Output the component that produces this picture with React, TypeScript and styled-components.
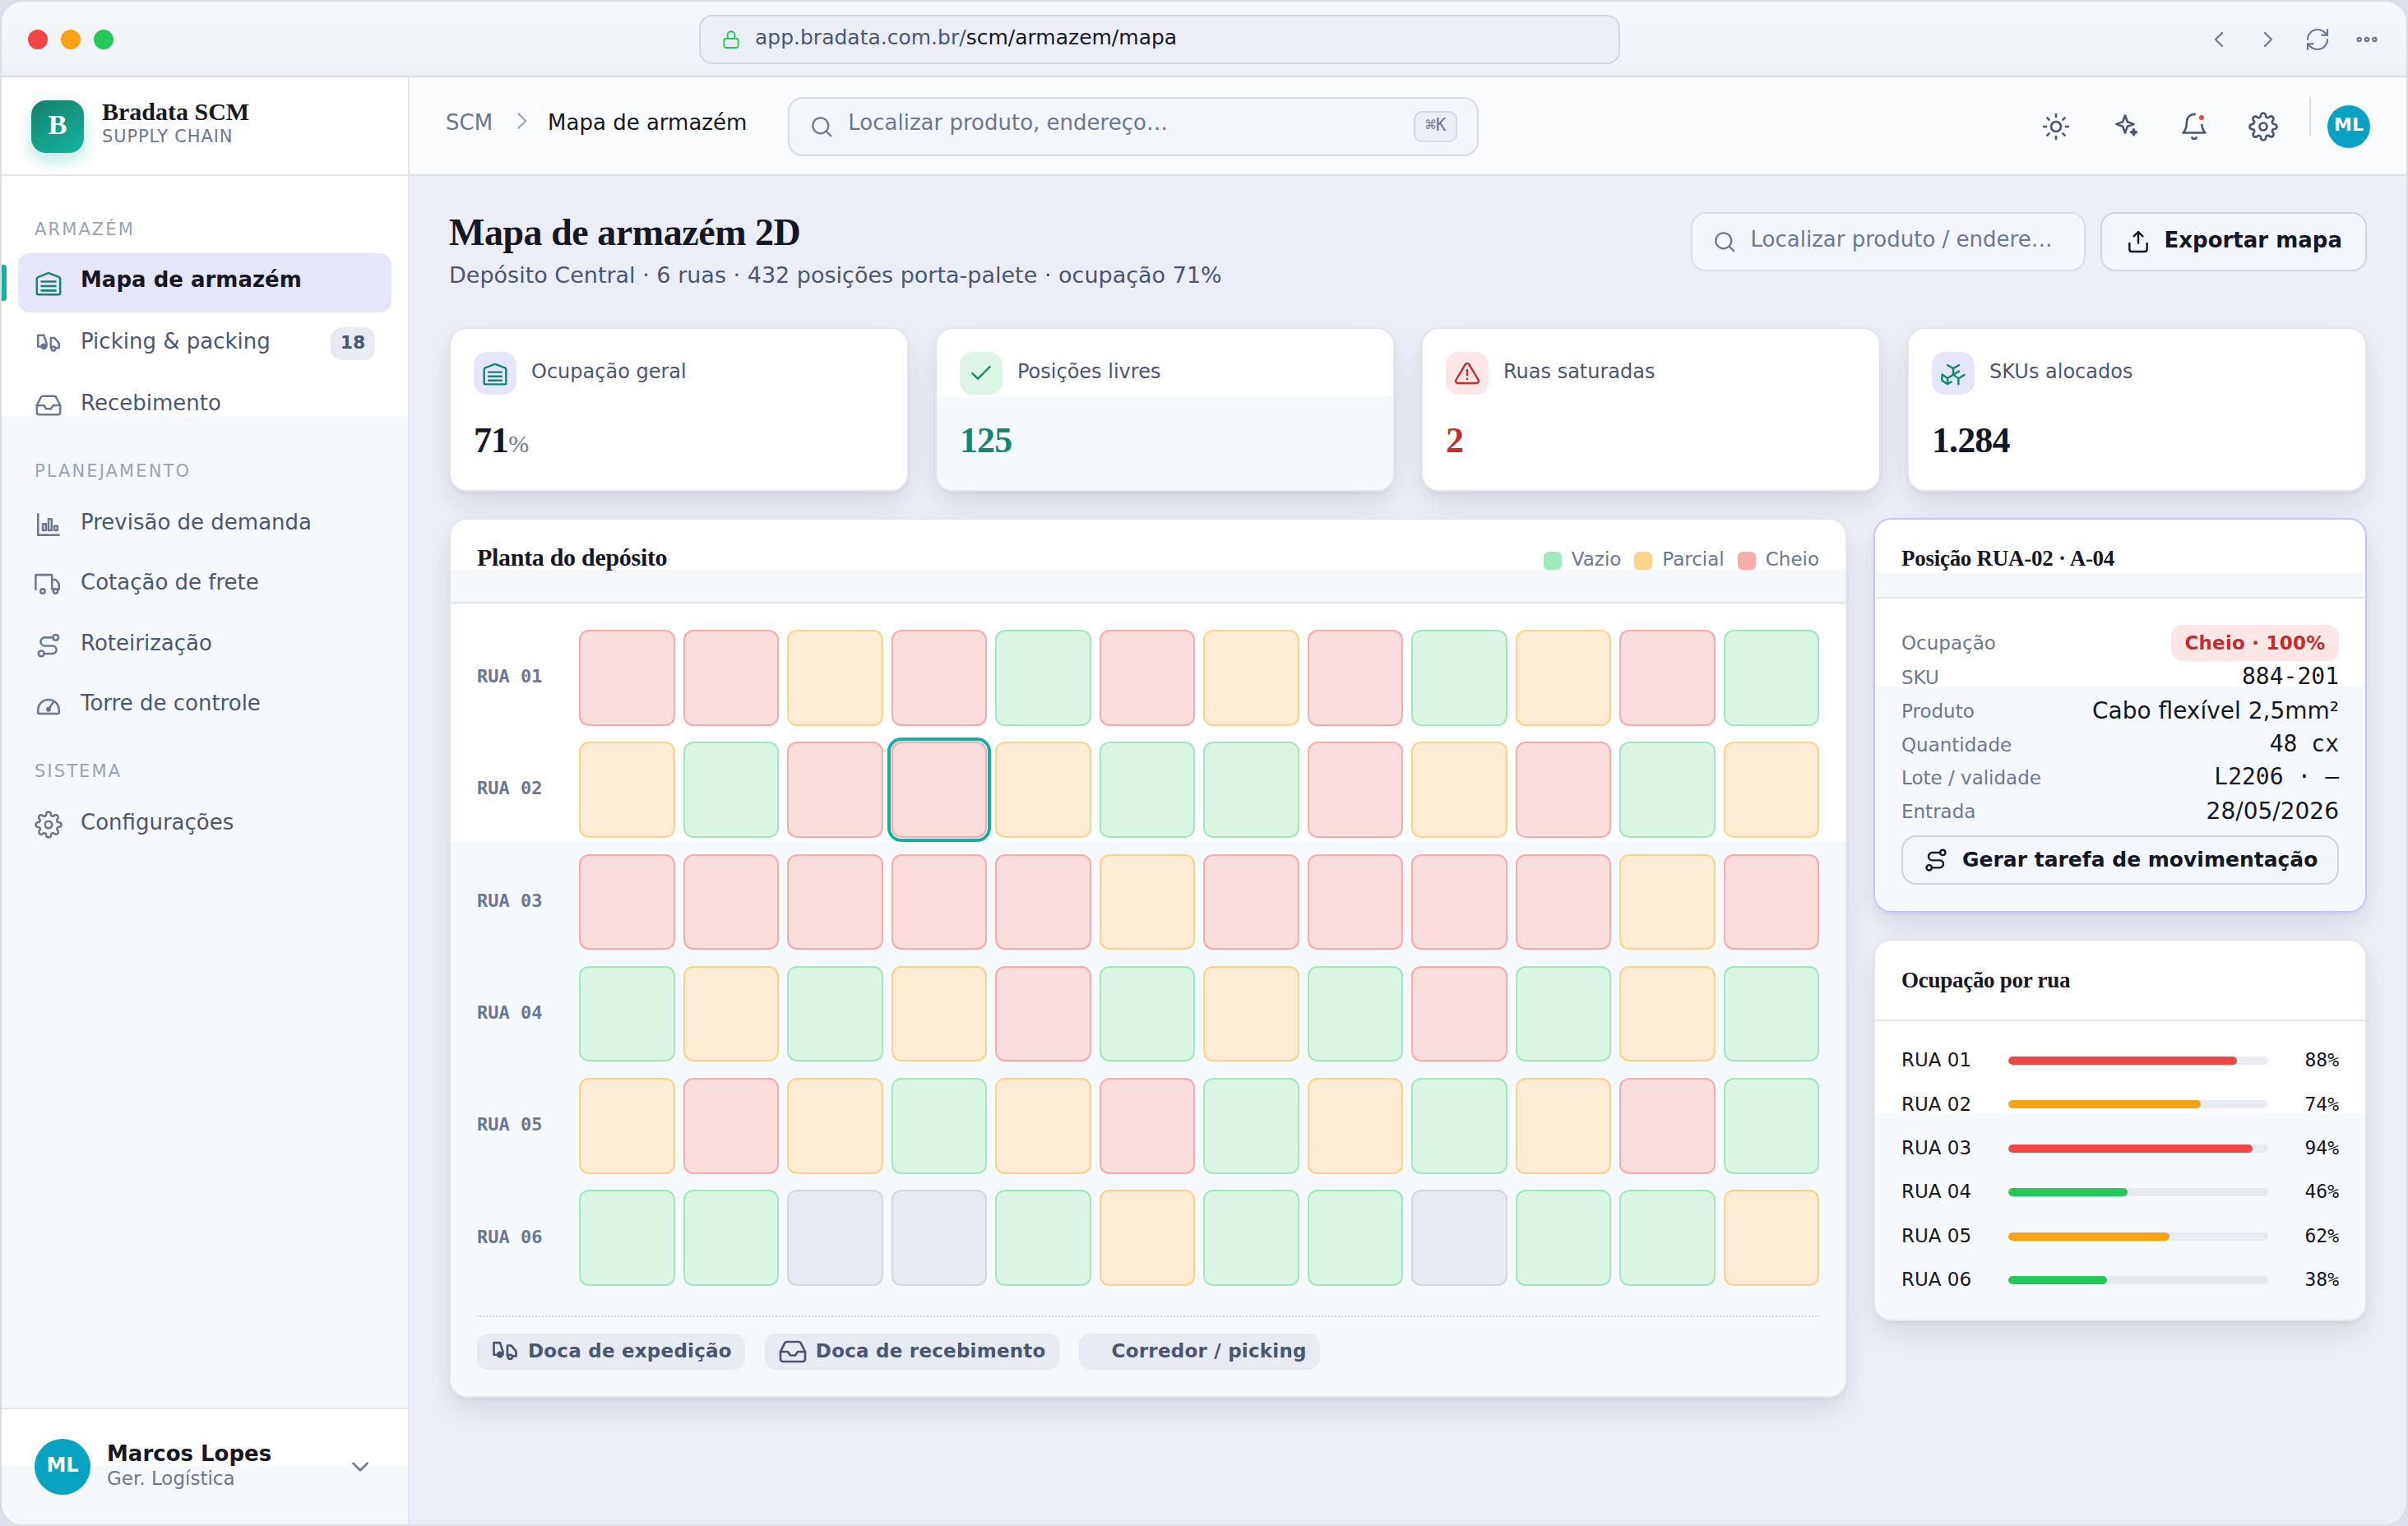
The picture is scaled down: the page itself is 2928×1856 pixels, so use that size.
import * as React from 'react';
import styled, {createGlobalStyle, ThemeProvider} from 'styled-components';

const theme = {
  colors: {
    ink: '#151824',
    text: '#4b5672',
    muted: '#6b7890',
    faint: '#98a4b5',
    line: '#e5e6ea',
    lineStrong: '#d5d8df',
    canvas: '#eceef6',
    surface: '#ffffff',
    tint: '#f5f9fc',
    field: '#f3f6fb',
    chip: '#e8ebf2',
    accentSoft: '#e6e6fb',
    teal: '#14b0a0',
    tealDark: '#15856f',
    green: '#25c85b',
    amber: '#f7a313',
    red: '#f14646',
    redDark: '#c52c2b',
    redSoft: '#fde6e6',
    greenSoft: '#dcf5e5',
    avatar: '#08a2c2',
  },
  font: {
    sans: '"DejaVu Sans", "Noto Sans", sans-serif',
    serif: '"Liberation Serif", "DejaVu Serif", serif',
    mono: '"DejaVu Sans Mono", "Liberation Mono", monospace',
  },
};

type Theme = typeof theme;
type P = { theme: Theme };

const GlobalStyle = createGlobalStyle`
  *, *::before, *::after { box-sizing: border-box; }
  html, body { margin: 0; padding: 0; background: #dfe0ee; }
  button { font: inherit; color: inherit; margin: 0; }
`;

/* ---------- icons ---------- */

const ICONS: Record<string, React.ReactNode> = {
  lock: (
    <>
      <rect x="4" y="11" width="16" height="10.2" rx="2.4"/>
      <path d="M8 11V7a4 4 0 0 1 8 0v4"/>
    </>
  ),
  left: <path d="M15 18l-6-6 6-6"/>,
  right: <path d="M9 18l6-6-6-6"/>,
  down: <path d="M6 9l6 6 6-6"/>,
  refresh: (
    <>
      <path d="M3 12a9 9 0 0 1 9-9 9.75 9.75 0 0 1 6.74 2.74L21 8"/>
      <path d="M21 3v5h-5"/>
      <path d="M21 12a9 9 0 0 1-9 9 9.75 9.75 0 0 1-6.74-2.74L3 16"/>
      <path d="M8 16H3v5"/>
    </>
  ),
  more: (
    <>
      <circle cx="5" cy="12" r="1.6"/>
      <circle cx="12" cy="12" r="1.6"/>
      <circle cx="19" cy="12" r="1.6"/>
    </>
  ),
  search: (
    <>
      <circle cx="11" cy="11" r="7.6"/>
      <path d="M21 21l-4.4-4.4"/>
    </>
  ),
  sun: (
    <>
      <circle cx="12" cy="12" r="4"/>
      <path d="M12 2v2M12 20v2M4.9 4.9l1.4 1.4M17.7 17.7l1.4 1.4M2 12h2M20 12h2M4.9 19.1l1.4-1.4M17.7 6.3l1.4-1.4"/>
    </>
  ),
  sparkle: (
    <>
      <path d="M12 3l1.9 5.1L19 10l-5.1 1.9L12 17l-1.9-5.1L5 10l5.1-1.9z"/>
      <path d="M19 14.2l.7 1.6 1.6.7-1.6.7-.7 1.6-.7-1.6-1.6-.7 1.6-.7z" fill="currentColor"/>
    </>
  ),
  bell: (
    <>
      <path d="M18 8A6 6 0 0 0 6 8c0 7-3 9-3 9h18s-3-2-3-9"/>
      <path d="M13.73 21a2 2 0 0 1-3.46 0"/>
    </>
  ),
  gear: (
    <>
      <circle cx="12" cy="12" r="3"/>
      <path d="M19.4 15a1.65 1.65 0 0 0 .33 1.82l.06.06a2 2 0 0 1 0 2.83 2 2 0 0 1-2.83 0l-.06-.06a1.65 1.65 0 0 0-1.82-.33 1.65 1.65 0 0 0-1 1.51V21a2 2 0 0 1-2 2 2 2 0 0 1-2-2v-.09A1.65 1.65 0 0 0 9 19.4a1.65 1.65 0 0 0-1.82.33l-.06.06a2 2 0 0 1-2.83 0 2 2 0 0 1 0-2.83l.06-.06a1.65 1.65 0 0 0 .33-1.82 1.65 1.65 0 0 0-1.51-1H3a2 2 0 0 1-2-2 2 2 0 0 1 2-2h.09A1.65 1.65 0 0 0 4.6 9a1.65 1.65 0 0 0-.33-1.82l-.06-.06a2 2 0 0 1 0-2.83 2 2 0 0 1 2.83 0l.06.06a1.65 1.65 0 0 0 1.82.33H9a1.65 1.65 0 0 0 1-1.51V3a2 2 0 0 1 2-2 2 2 0 0 1 2 2v.09a1.65 1.65 0 0 0 1 1.51 1.65 1.65 0 0 0 1.82-.33l.06-.06a2 2 0 0 1 2.83 0 2 2 0 0 1 0 2.83l-.06.06a1.65 1.65 0 0 0-.33 1.82V9a1.65 1.65 0 0 0 1.51 1H21a2 2 0 0 1 2 2 2 2 0 0 1-2 2h-.09a1.65 1.65 0 0 0-1.51 1z"/>
    </>
  ),
  warehouse: (
    <>
      <path d="M2 21.2V8.6a1.6 1.6 0 0 1 1-1.5l8.3-3.3a2 2 0 0 1 1.4 0L21 7.1a1.6 1.6 0 0 1 1 1.5v12.6a.8.8 0 0 1-.8.8H2.8a.8.8 0 0 1-.8-.8z"/>
      <path d="M6 11h12M6 14.8h12M6 18.6h12"/>
    </>
  ),
  picking: (
    <>
      <path d="M6 14.5H3V4.8h5l2.3 7v2.7"/>
      <circle cx="7.9" cy="14.4" r="1.9" fill="currentColor"/>
      <path d="M14 15.5V7h3l4 4.6v4h-2.500"/>
      <circle cx="16.2" cy="16.2" r="1.7"/>
    </>
  ),
  inbox: (
    <>
      <path d="M22 12h-6l-2 3h-4l-2-3H2"/>
      <path d="M5.45 5.11L2 12v6a2 2 0 0 0 2 2h16a2 2 0 0 0 2-2v-6l-3.45-6.89A2 2 0 0 0 16.76 4H7.24a2 2 0 0 0-1.79 1.11z"/>
    </>
  ),
  chart: (
    <>
      <path d="M3 3v18h18"/>
      <path d="M7.1 11.4h2.7V17H7.1zM12 7.3h2.7V17H12zM17 13.3h2.7V17H17z"/>
    </>
  ),
  truck: (
    <>
      <path d="M1 16V4.600a1 1 0 0 1 1-1h12a1 1 0 0 1 1 1V16h6v-4.800l-2.800-3.400H15"/>
      <circle cx="7" cy="17.700" r="1.900"/>
      <circle cx="18" cy="17.700" r="1.900"/>
    </>
  ),
  route: (
    <>
      <circle cx="18.200" cy="5.200" r="2.400"/>
      <circle cx="5.800" cy="19" r="2.400"/>
      <path d="M15.800 5.200H8.800a3.500 3.500 0 0 0 0 7.100h6.600a3.350 3.350 0 0 1 0 6.700H8.200"/>
    </>
  ),
  gauge: (
    <>
      <path d="M3 18V16a9 9 0 0 1 18 0v2a1 1 0 0 1-1 1H4a1 1 0 0 1-1-1z"/>
      <path d="M12 15.200l3.900-5.600"/>
      <circle cx="12" cy="15.300" r="1.200" fill="currentColor"/>
    </>
  ),
  check: <path d="M20 6L9 17l-5-5"/>,
  alert: (
    <>
      <path d="M10.29 3.86L1.82 18a2 2 0 0 0 1.71 3h16.94a2 2 0 0 0 1.71-3L13.71 3.86a2 2 0 0 0-3.42 0z"/>
      <path d="M12 9v4.500M12 17v.2"/>
    </>
  ),
  sprout: (
    <>
      <path d="M6.800 4.500L12 7.600l5.300-3.100M12 7.600v5.600M17.300 10.200L6.800 16.500 2 13.200c-.5 2.400-.5 4 0 5.600l4.800 3.100 3.500-2.200M6.800 16.500v5.400"/>
      <path d="M12 13.200l4.800 3.600 5.400-3.400M16.800 16.800V22"/>
    </>
  ),
  upload: (
    <>
      <path d="M12 13.200V3M8 7l4-4 4 4"/>
      <path d="M4 13.500V19a2 2 0 0 0 2 2h12a2 2 0 0 0 2-2v-5.500"/>
    </>
  ),
};

const Svg = styled.svg`
  display: block;
  flex: none;
  fill: none;
  stroke: currentColor;
  stroke-linecap: round;
  stroke-linejoin: round;
`;

const Icon = ({name, size, stroke = 1.8}: { name: string; size: number; stroke?: number }) => (
  <Svg width={size} height={size} viewBox="0 0 24 24" strokeWidth={stroke}>{ICONS[name]}</Svg>
);

/* ---------- window ---------- */

const Window = styled.div`
  width: 2928px;
  height: 1856px;
  border: 2px solid #dbdde2;
  border-radius: 28px;
  overflow: hidden;
  display: flex;
  flex-direction: column;
  background: ${(p: P) => p.theme.colors.canvas};
  color: ${(p: P) => p.theme.colors.ink};
  font-family: ${(p: P) => p.theme.font.sans};
  font-size: 26px;
  line-height: 1.2;
  white-space: nowrap;
`;

const TitleBar = styled.header`
  flex: none;
  height: 92px;
  padding: 2px 32px 0;
  display: grid;
  grid-template-columns: 816px 1120px 1fr;
  align-items: center;
  background: linear-gradient(#f6fafd, #edf0f5);
  border-bottom: 2px solid #dcdee4;
`;

const Lights = styled.div`
  display: flex;
  gap: 16px;
`;

const Light = styled.span<{ color: string }>`
  width: 24px;
  height: 24px;
  border-radius: 50%;
  background: ${p => p.color};
`;

const Address = styled.div`
  height: 60px;
  padding: 0 24px;
  display: flex;
  align-items: center;
  gap: 16px;
  border: 2px solid ${(p: P) => p.theme.colors.lineStrong};
  border-radius: 16px;
  background: ${(p: P) => p.theme.colors.canvas};
  color: ${(p: P) => p.theme.colors.green};
`;

const AddressText = styled.span`
  padding-bottom: 5px;
  font-size: 25px;
  color: ${(p: P) => p.theme.colors.text};
  b {
    font-weight: 400;
    color: ${(p: P) => p.theme.colors.ink};
  }
`;

const WindowTools = styled.div`
  display: flex;
  justify-content: flex-end;
  gap: 28px;
  color: ${(p: P) => p.theme.colors.muted};
`;

const Body = styled.div`
  flex: 1;
  min-height: 0;
  display: flex;
`;

/* ---------- sidebar ---------- */

// surface that turns from white to the cool tint at a given height
const surface = (p: P & { $split?: number }) => p.$split
  ? `linear-gradient(${p.theme.colors.surface} ${p.$split}px, ${p.theme.colors.tint} ${p.$split}px)`
  : p.theme.colors.surface;

const Sidebar = styled.aside`
  flex: none;
  width: 496px;
  display: flex;
  flex-direction: column;
  border-right: 2px solid ${(p: P) => p.theme.colors.line};
  background: ${(p: P) => p.theme.colors.surface};
`;

const Brand = styled.div`
  flex: none;
  height: 120px;
  padding: 2px 36px 0;
  display: flex;
  align-items: center;
  gap: 22px;
  border-bottom: 2px solid ${(p: P) => p.theme.colors.line};
`;

const Logo = styled.div`
  width: 64px;
  height: 64px;
  padding-bottom: 5px;
  display: grid;
  place-items: center;
  border-radius: 18px;
  background: linear-gradient(150deg, #178069, #14b4a4);
  box-shadow: 0 8px 20px rgba(20, 176, 160, .32);
  color: #fff;
  font: 700 34px/1 ${(p: P) => p.theme.font.serif};
`;

const BrandName = styled.div`
  font: 700 30px/34px ${(p: P) => p.theme.font.serif};
`;

const BrandSub = styled.div`
  margin-bottom: 9px;
  font-size: 21px;
  line-height: 27px;
  letter-spacing: .04em;
  color: ${(p: P) => p.theme.colors.muted};
`;

const Nav = styled.nav<{ $split?: number }>`
  flex: 1;
  padding: 20.7px 20px;
  background: ${surface};
`;

const NavLabel = styled.div`
  margin: 28px 0 12.9px;
  padding: 0 20px;
  font-size: 21px;
  line-height: 32px;
  letter-spacing: .1em;
  color: ${(p: P) => p.theme.colors.faint};
`;

const NavItem = styled.a<{ $active?: boolean; $tall?: boolean }>`
  position: relative;
  height: ${p => p.$tall ? 74.5 : 72}px;
  margin-bottom: 1.5px;
  padding: 0 20px;
  display: flex;
  align-items: center;
  gap: 22px;
  border-radius: 14px;
  background: ${p => p.$active ? (p.theme as Theme).colors.accentSoft : 'transparent'};
  color: ${p => p.$active ? (p.theme as Theme).colors.tealDark : (p.theme as Theme).colors.muted};

  &::before {
    content: ${p => p.$active ? '""' : 'none'};
    position: absolute;
    left: -20px;
    top: 14px;
    width: 6px;
    height: 44px;
    border-radius: 0 4px 4px 0;
    background: ${(p: P) => p.theme.colors.teal};
  }
`;

const NavText = styled.span<{ $active?: boolean }>`
  flex: 1;
  padding-bottom: 5px;
  font-weight: ${p => p.$active ? 700 : 400};
  color: ${p => p.$active ? (p.theme as Theme).colors.ink : (p.theme as Theme).colors.text};
`;

const Count = styled.span`
  width: 54px;
  height: 40px;
  border-radius: 14px;
  background: ${(p: P) => p.theme.colors.chip};
  color: ${(p: P) => p.theme.colors.text};
  font-size: 22px;
  font-weight: 700;
  line-height: 37px;
  text-align: center;
`;

const UserBar = styled.div<{ $split?: number }>`
  flex: none;
  height: 142px;
  padding: 0 41px 0 40px;
  display: flex;
  align-items: center;
  border-top: 2px solid ${(p: P) => p.theme.colors.line};
  background: ${surface};
  color: ${(p: P) => p.theme.colors.muted};
`;

const Avatar = styled.div<{ $size: number }>`
  flex: none;
  width: ${p => p.$size}px;
  height: ${p => p.$size}px;
  padding-bottom: 4px;
  display: grid;
  place-items: center;
  border-radius: 50%;
  background: ${(p: P) => p.theme.colors.avatar};
  color: #fff;
  font-weight: 700;
  font-size: ${p => p.$size > 60 ? 24 : 22}px;
`;

const UserText = styled.div`
  flex: 1;
  margin: 0 0 2px 20px;
  line-height: 30px;
  font-size: 23px;
  b {
    display: block;
    font-size: 26px;
    color: ${(p: P) => p.theme.colors.ink};
  }
`;

/* ---------- top bar ---------- */

const Main = styled.main`
  flex: 1;
  min-width: 0;
  display: flex;
  flex-direction: column;
`;

const TopBar = styled.div`
  flex: none;
  height: 120px;
  padding: 2px 44px 0;
  display: flex;
  align-items: center;
  border-bottom: 2px solid #dfe1e8;
  background: #fafbfd;
`;

const Crumb = styled.span<{ $current?: boolean }>`
  padding-bottom: 8px;
  color: ${p => p.$current ? (p.theme as Theme).colors.ink : (p.theme as Theme).colors.muted};
`;

const CrumbArrow = styled.span`
  margin: 0 14px 14px 19px;
  color: ${(p: P) => p.theme.colors.faint};
`;

const Field = styled.div<{ $width: number; $lift: number }>`
  width: ${p => p.$width}px;
  height: 72px;
  padding: 0 24px;
  display: flex;
  align-items: center;
  gap: 17px;
  border: 2px solid #dadde3;
  border-radius: 18px;
  background: ${(p: P) => p.theme.colors.field};
  color: ${(p: P) => p.theme.colors.muted};
  > span {
    flex: 1;
    padding-bottom: ${p => p.$lift}px;
  }
`;

const GlobalSearch = styled(Field)`
  margin-left: 50px;
`;

const Kbd = styled.kbd`
  width: 53px;
  height: 38px;
  border: 2px solid ${(p: P) => p.theme.colors.lineStrong};
  border-radius: 10px;
  background: ${(p: P) => p.theme.colors.canvas};
  font: 21px/30px ${(p: P) => p.theme.font.mono};
  text-align: center;
`;

const Actions = styled.div`
  margin-left: auto;
  display: flex;
  align-items: center;
  gap: 12px;
`;

const IconButton = styled.button`
  position: relative;
  width: 72px;
  height: 72px;
  padding: 0;
  display: grid;
  place-items: center;
  border: 0;
  background: none;
  color: ${(p: P) => p.theme.colors.text};
`;

const Dot = styled.i`
  position: absolute;
  left: 37px;
  top: 17px;
  width: 16px;
  height: 16px;
  border: 5px solid #fdfdfe;
  border-radius: 50%;
  background: ${(p: P) => p.theme.colors.red};
`;

const Divider = styled.i`
  width: 2px;
  height: 48px;
  margin: 0 8px 24px;
  background: #dfe1e8;
`;

/* ---------- page ---------- */

const Page = styled.div`
  flex: 1;
  padding: 44px 48px;
`;

const PageHead = styled.div`
  height: 140px;
  display: flex;
  align-items: flex-start;
  gap: 18px;
`;

const Title = styled.h1`
  margin: 2px 0 10px;
  font: 700 46px/46px ${(p: P) => p.theme.font.serif};
  letter-spacing: -.01em;
`;

const Subtitle = styled.p`
  margin: 0;
  font-size: 27px;
  line-height: 38px;
  color: ${(p: P) => p.theme.colors.text};
`;

const Headings = styled.div`
  flex: 1;
`;

const Button = styled.button<{ $small?: boolean }>`
  width: ${p => p.$small ? '100%' : 'auto'};
  height: ${p => p.$small ? 60 : 72}px;
  padding: 0 ${p => p.$small ? 24 : 28}px;
  display: flex;
  align-items: center;
  gap: 16px;
  border: 2px solid #d3d6de;
  border-radius: 18px;
  background: ${(p: P) => p.theme.colors.field};
  color: ${(p: P) => p.theme.colors.ink};
  font-weight: 700;
  font-size: ${p => p.$small ? 25 : 26}px;
  > span {
    padding-bottom: ${p => p.$small ? 1 : 2}px;
  }
`;

const card = `
  border: 2px solid #e5e6ea;
  border-radius: 22px;
  box-shadow: 0 2px 4px rgba(24, 30, 50, .06), 0 16px 36px -6px rgba(24, 30, 50, .13);
`;

const Kpis = styled.div`
  display: grid;
  grid-template-columns: repeat(4, 1fr);
  gap: 32px;
  margin-bottom: 32px;
`;

const Kpi = styled.div<{ $split?: number }>`
  ${card}
  height: 200px;
  padding: 28px;
  background: ${surface};
`;

const KpiHead = styled.div`
  display: flex;
  align-items: center;
  gap: 18px;
  font-size: 24px;
  color: ${(p: P) => p.theme.colors.text};
  > span {
    padding-bottom: 4px;
  }
`;

const Tile = styled.div<{ $bg: string; $fg: string }>`
  width: 52px;
  height: 52px;
  display: grid;
  place-items: center;
  border-radius: 16px;
  background: ${p => p.$bg};
  color: ${p => p.$fg};
`;

const KpiValue = styled.div<{ $color: string }>`
  margin-top: 31px;
  font: 700 44px/50px ${(p: P) => p.theme.font.serif};
  letter-spacing: -.02em;
  color: ${p => p.$color};
  small {
    font-size: 30px;
    font-weight: 400;
    color: ${(p: P) => p.theme.colors.muted};
  }
`;

const Columns = styled.div`
  display: grid;
  grid-template-columns: 1fr 600px;
  align-items: start;
  gap: 32px;
`;

const Side = styled.div`
  display: grid;
  gap: 32px;
`;

const Panel = styled.section<{ $focus?: boolean }>`
  ${card}
  overflow: hidden;
  border-color: ${p => p.$focus ? '#c6c6f8' : '#e5e6ea'};
`;

const PanelHead = styled.div<{ $height: number; $split?: number }>`
  height: ${p => p.$height}px;
  padding: 0 32px;
  display: flex;
  align-items: center;
  justify-content: space-between;
  border-bottom: 2px solid ${(p: P) => p.theme.colors.line};
  background: ${surface};
`;

const PanelTitle = styled.h2<{ $large?: boolean }>`
  margin: 0;
  padding-bottom: ${p => p.$large ? 8 : 0}px;
  font: 700 ${p => p.$large ? 30 : 27}px/1.2 ${(p: P) => p.theme.font.serif};
  letter-spacing: -.01em;
`;

const PanelBody = styled.div<{ $split?: number }>`
  padding: 32px;
  background: ${surface};
`;

const Legend = styled.div`
  display: flex;
  align-items: center;
  gap: 12px;
  font-size: 23px;
  color: ${(p: P) => p.theme.colors.muted};
  > span {
    padding-bottom: 3px;
  }
  > span + i {
    margin-left: 4px;
  }
`;

const Swatch = styled.i<{ $color: string }>`
  width: 22px;
  height: 22px;
  border-radius: 6px;
  background: ${p => p.$color};
`;

/* ---------- floor plan ---------- */

const CELLS: Record<string, [string, string]> = {
  F: ['#fbdddd', '#f8abab'],
  P: ['#fdecd3', '#fad38c'],
  E: ['#daf5e4', '#a1e8bc'],
  B: ['#e8eaf2', '#d4d6e0'],
};

const Floor = styled.div`
  display: grid;
  gap: 19.8px;
`;

const Aisle = styled.div`
  display: grid;
  grid-template-columns: 114px repeat(12, 1fr);
  align-items: center;
  column-gap: 10px;
`;

const AisleName = styled.span`
  padding-bottom: 2px;
  font: 700 22px/1.2 ${(p: P) => p.theme.font.mono};
  color: ${(p: P) => p.theme.colors.muted};
`;

const Cell = styled.div<{ $kind: string; $selected?: boolean }>`
  aspect-ratio: 1;
  border: 2px solid ${p => CELLS[p.$kind][1]};
  border-radius: 12px;
  background: ${p => CELLS[p.$kind][0]};
  ${p => p.$selected && `
    outline: 4px solid ${(p.theme as Theme).colors.teal};
    outline-offset: 1px;
  `}
`;

const Docks = styled.div`
  margin-top: 36px;
  padding-top: 20px;
  display: flex;
  gap: 24px;
  border-top: 2px dotted #d5d8df;
`;

const Dock = styled.span`
  height: 44px;
  padding: 0 16px;
  display: flex;
  align-items: center;
  gap: 10px;
  border-radius: 14px;
  background: ${(p: P) => p.theme.colors.chip};
  color: ${(p: P) => p.theme.colors.text};
  font-size: 23px;
  font-weight: 700;
  letter-spacing: .01em;
`;

const DockBlank = styled.i`
  width: 14px;
`;

/* ---------- side panels ---------- */

const Detail = styled.div<{ $height: number }>`
  height: ${p => p.$height}px;
  display: flex;
  align-items: center;
  justify-content: space-between;
  font-size: 23px;
  color: ${(p: P) => p.theme.colors.muted};
`;

const DetailLabel = styled.span`
  padding-top: 1px;
`;

const Value = styled.span<{ $mono?: boolean }>`
  padding-bottom: ${p => p.$mono ? 2 : 0}px;
  font-size: 28px;
  font-family: ${p => p.$mono ? (p.theme as Theme).font.mono : 'inherit'};
  color: ${(p: P) => p.theme.colors.ink};
`;

const Pill = styled.span`
  padding: 0 16.5px;
  border-radius: 14px;
  background: ${(p: P) => p.theme.colors.redSoft};
  color: ${(p: P) => p.theme.colors.redDark};
  font-weight: 700;
  letter-spacing: .01em;
  line-height: 44px;
`;

const DetailAction = styled.div`
  margin-top: 8px;
`;

const Rates = styled.div`
  display: grid;
  gap: 21.4px;
`;

const Rate = styled.div`
  height: 32px;
  display: grid;
  grid-template-columns: 130px 316px 1fr;
  align-items: center;
  font-size: 23px;
`;

const Track = styled.div`
  height: 10px;
  border-radius: 5px;
  overflow: hidden;
  background: ${(p: P) => p.theme.colors.chip};
`;

const Fill = styled.div<{ $color: string }>`
  height: 100%;
  border-radius: 5px;
  background: ${p => p.$color};
`;

const Percent = styled.span`
  font-family: ${(p: P) => p.theme.font.mono};
  text-align: right;
`;

/* ---------- data ---------- */

const c = theme.colors;

const NAV = [
  {
    label: 'ARMAZÉM',
    items: [
      {icon: 'warehouse', text: 'Mapa de armazém', active: true},
      {icon: 'picking', text: 'Picking & packing', count: 18},
      {icon: 'inbox', text: 'Recebimento'},
    ],
  },
  {
    label: 'PLANEJAMENTO',
    items: [
      {icon: 'chart', text: 'Previsão de demanda'},
      {icon: 'truck', text: 'Cotação de frete'},
      {icon: 'route', text: 'Roteirização'},
      {icon: 'gauge', text: 'Torre de controle'},
    ],
  },
  {
    label: 'SISTEMA',
    items: [{icon: 'gear', text: 'Configurações'}],
  },
] as { label: string; items: { icon: string; text: string; active?: boolean; count?: number }[] }[];

const KPIS = [
  {icon: 'warehouse', label: 'Ocupação geral', value: '71', unit: '%', bg: c.accentSoft, fg: c.tealDark, color: c.ink},
  {icon: 'check', label: 'Posições livres', value: '125', bg: c.greenSoft, fg: c.tealDark, color: c.tealDark, split: 82},
  {icon: 'alert', label: 'Ruas saturadas', value: '2', bg: c.redSoft, fg: c.redDark, color: c.redDark},
  {icon: 'sprout', label: 'SKUs alocados', value: '1.284', bg: c.accentSoft, fg: c.tealDark, color: c.ink},
];

// E = vazio, P = parcial, F = cheio, B = bloqueado
const FLOOR = [
  'FFPFEFPFEPFE',
  'PEFFPEEFPFEP',
  'FFFFFPFFFFPF',
  'EPEPFEPEFEPE',
  'PFPEPFEPEPFE',
  'EEBBEPEEBEEP',
];

const DETAILS = [
  {label: 'SKU', value: '884-201', mono: true},
  {label: 'Produto', value: 'Cabo flexível 2,5mm²'},
  {label: 'Quantidade', value: '48 cx', mono: true},
  {label: 'Lote / validade', value: 'L2206 · —', mono: true},
  {label: 'Entrada', value: '28/05/2026'},
];

const RATES = [88, 74, 94, 46, 62, 38];

const rateColor = (v: number) => v > 80 ? c.red : v > 50 ? c.amber : c.green;

const aisleName = (i: number) => `RUA 0${i + 1}`;

export default function App() {
  return (
    <ThemeProvider theme={theme}>
      <GlobalStyle/>
      <Window>
        <TitleBar>
          <Lights>
            <Light color={c.red}/>
            <Light color={c.amber}/>
            <Light color={c.green}/>
          </Lights>
          <Address>
            <Icon name="lock" size={26}/>
            <AddressText>app.bradata.com.br/<b>scm/armazem/mapa</b></AddressText>
          </Address>
          <WindowTools>
            {['left', 'right', 'refresh', 'more'].map(n => <Icon key={n} name={n} size={32} stroke={1.6}/>)}
          </WindowTools>
        </TitleBar>

        <Body>
          <Sidebar>
            <Brand>
              <Logo>B</Logo>
              <div>
                <BrandName>Bradata SCM</BrandName>
                <BrandSub>SUPPLY CHAIN</BrandSub>
              </div>
            </Brand>
            <Nav $split={292}>
              {NAV.map(group => (
                <React.Fragment key={group.label}>
                  <NavLabel>{group.label}</NavLabel>
                  {group.items.map(item => (
                    <NavItem key={item.text} $active={item.active} $tall={!!item.count}>
                      <Icon name={item.icon} size={34}/>
                      <NavText $active={item.active}>{item.text}</NavText>
                      {item.count && <Count>{item.count}</Count>}
                    </NavItem>
                  ))}
                </React.Fragment>
              ))}
            </Nav>
            <UserBar $split={69}>
              <Avatar $size={68}>ML</Avatar>
              <UserText>
                <b>Marcos Lopes</b>
                Ger. Logística
              </UserText>
              <Icon name="down" size={34}/>
            </UserBar>
          </Sidebar>

          <Main>
            <TopBar>
              <Crumb>SCM</Crumb>
              <CrumbArrow><Icon name="right" size={34} stroke={1.6}/></CrumbArrow>
              <Crumb $current>Mapa de armazém</Crumb>
              <GlobalSearch $width={840} $lift={9}>
                <Icon name="search" size={30}/>
                <span>Localizar produto, endereço…</span>
                <Kbd>⌘K</Kbd>
              </GlobalSearch>
              <Actions>
                <IconButton><Icon name="sun" size={36}/></IconButton>
                <IconButton><Icon name="sparkle" size={36}/></IconButton>
                <IconButton><Icon name="bell" size={36}/><Dot/></IconButton>
                <IconButton><Icon name="gear" size={36}/></IconButton>
                <Divider/>
                <Avatar $size={52}>ML</Avatar>
              </Actions>
            </TopBar>

            <Page>
              <PageHead>
                <Headings>
                  <Title>Mapa de armazém 2D</Title>
                  <Subtitle>Depósito Central · 6 ruas · 432 posições porta-palete · ocupação 71%</Subtitle>
                </Headings>
                <Field $width={480} $lift={4}>
                  <Icon name="search" size={30}/>
                  <span>Localizar produto / endere…</span>
                </Field>
                <Button><Icon name="upload" size={32}/><span>Exportar mapa</span></Button>
              </PageHead>

              <Kpis>
                {KPIS.map(k => (
                  <Kpi key={k.label} $split={k.split}>
                    <KpiHead>
                      <Tile $bg={k.bg} $fg={k.fg}><Icon name={k.icon} size={32}/></Tile>
                      <span>{k.label}</span>
                    </KpiHead>
                    <KpiValue $color={k.color}>{k.value}{k.unit && <small>{k.unit}</small>}</KpiValue>
                  </Kpi>
                ))}
              </Kpis>

              <Columns>
                <Panel>
                  <PanelHead $height={102} $split={61}>
                    <PanelTitle $large>Planta do depósito</PanelTitle>
                    <Legend>
                      <Swatch $color="#a1e8bc"/><span>Vazio</span>
                      <Swatch $color="#fad38c"/><span>Parcial</span>
                      <Swatch $color="#f8abab"/><span>Cheio</span>
                    </Legend>
                  </PanelHead>
                  <PanelBody $split={290}>
                    <Floor>
                      {FLOOR.map((row, i) => (
                        <Aisle key={i}>
                          <AisleName>{aisleName(i)}</AisleName>
                          {row.split('').map((kind, j) => (
                            <Cell key={j} $kind={kind} $selected={i === 1 && j === 3}/>
                          ))}
                        </Aisle>
                      ))}
                    </Floor>
                    <Docks>
                      <Dock><Icon name="picking" size={36}/>Doca de expedição</Dock>
                      <Dock><Icon name="inbox" size={36}/>Doca de recebimento</Dock>
                      <Dock><DockBlank/>Corredor / picking</Dock>
                    </Docks>
                  </PanelBody>
                </Panel>

                <Side>
                  <Panel $focus>
                    <PanelHead $height={96} $split={65}>
                      <PanelTitle>Posição RUA-02 · A-04</PanelTitle>
                    </PanelHead>
                    <PanelBody $split={107}>
                      <Detail $height={44}>
                        <DetailLabel>Ocupação</DetailLabel>
                        <Pill>Cheio · 100%</Pill>
                      </Detail>
                      {DETAILS.map(d => (
                        <Detail key={d.label} $height={d.mono ? 40 : 42}>
                          <DetailLabel>{d.label}</DetailLabel>
                          <Value $mono={d.mono}>{d.value}</Value>
                        </Detail>
                      ))}
                      <DetailAction>
                        <Button $small><Icon name="route" size={32}/><span>Gerar tarefa de movimentação</span></Button>
                      </DetailAction>
                    </PanelBody>
                  </Panel>

                  <Panel>
                    <PanelHead $height={98}>
                      <PanelTitle>Ocupação por rua</PanelTitle>
                    </PanelHead>
                    <PanelBody $split={112}>
                      <Rates>
                        {RATES.map((v, i) => (
                          <Rate key={i}>
                            {aisleName(i)}
                            <Track><Fill $color={rateColor(v)} style={{width: `${v}%`}}/></Track>
                            <Percent>{v}%</Percent>
                          </Rate>
                        ))}
                      </Rates>
                    </PanelBody>
                  </Panel>
                </Side>
              </Columns>
            </Page>
          </Main>
        </Body>
      </Window>
    </ThemeProvider>
  );
}
